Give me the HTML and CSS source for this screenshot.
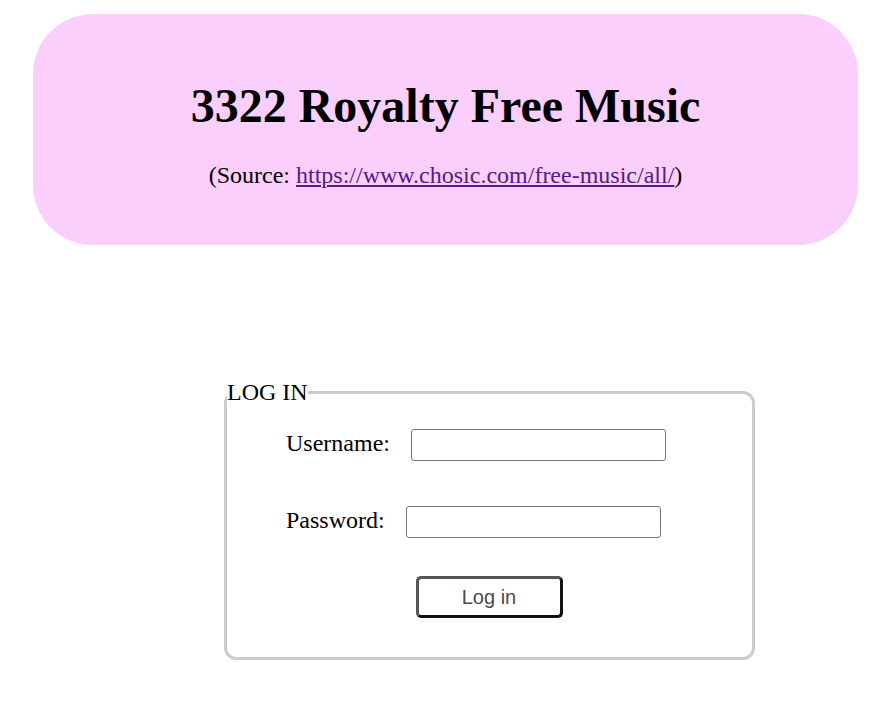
FILE: index.html
```html
<!DOCTYPE html>
<html>
<head>
<meta charset="utf-8">
<title>3322 Royalty Free Music</title>
<link rel="stylesheet" href="styles.css">
</head>
<body>
<header class="banner">
  <h1 class="title">3322 Royalty Free Music</h1>
  <p class="source">(Source: <a class="source-link" href="#">https://www.chosic.com/free-music/all/</a>)</p>
</header>
<form class="login-form">
  <fieldset class="login-box">
    <legend class="login-legend">LOG IN</legend>
    <div class="login-body">
      <div class="field-row field-user">
        <label class="field-label" for="u">Username:</label>
        <input class="field-input" id="u" type="text">
      </div>
      <div class="field-row field-pass">
        <label class="field-label" for="p">Password:</label>
        <input class="field-input" id="p" type="password">
      </div>
      <div class="button-row">
        <button class="login-button" type="button">Log in</button>
      </div>
    </div>
  </fieldset>
</form>
</body>
</html>
```
FILE: styles.css
```css
body {
  margin: 8px;
  font-family: "Liberation Serif", "Times New Roman", serif;
  color: #000;
  background: #fff;
}
.banner {
  margin: 6px 0 0 25px;
  width: 825px;
  background: #facffc;
  border-radius: 60px;
  padding: 64px 0 56px;
  text-align: center;
}
.title {
  margin: 0 0 29px;
  font-size: 48px;
  font-weight: bold;
  line-height: normal;
}
.source {
  margin: 0;
  font-size: 24px;
  line-height: normal;
}
.source-link {
  color: #551a8b;
  text-decoration: underline;
}
.login-form {
  margin: 134px 0 0 216px;
  width: 531px;
}
.login-box {
  margin: 0;
  padding: 0;
  border: 3px solid #cccccc;
  border-radius: 12px;
}
.login-legend {
  padding: 0;
  font-size: 24px;
  line-height: normal;
}
.login-body {
  padding: 23px 0 39px 59px;
  display: flex;
  flex-direction: column;
}
.field-row {
  display: flex;
  align-items: center;
  gap: 21px;
}
.field-pass {
  margin-top: 45px;
}
.field-label {
  font-size: 24px;
  padding-bottom: 4px;
}
.field-input {
  box-sizing: border-box;
  width: 255px;
  height: 32px;
  margin: 0;
  border: 1px solid #767676;
  border-radius: 3px;
  background: #fff;
}
.button-row {
  margin-top: 38px;
  margin-left: -60px;
  display: flex;
  justify-content: center;
}
.login-button {
  box-sizing: border-box;
  width: 147px;
  height: 42px;
  background: #fff;
  border: 3px solid;
  border-color: #555 #111 #111 #555;
  border-radius: 5px;
  font-family: "Liberation Sans", Arial, sans-serif;
  font-size: 20px;
  color: #4a4a4a;
  padding: 0;
}
```
